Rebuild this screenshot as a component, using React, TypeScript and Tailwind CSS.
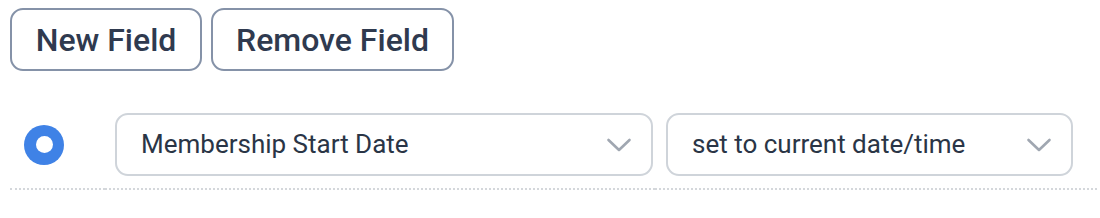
import React from "react";

function Chevron() {
  return (
    <svg width="26" height="16" viewBox="0 0 26 16" fill="none" className="shrink-0">
      <path d="M2.5 3 L13 13 L23.5 3" stroke="#a0a7b1" strokeWidth="2.6" strokeLinecap="round" strokeLinejoin="round" />
    </svg>
  );
}

function Select({ label, width }: { label: string; width: string }) {
  return (
    <div
      className={`${width} h-[63px] flex items-center justify-between rounded-[13px] border-2 border-[#cfd4da] bg-white pl-[24px] pr-[19px] text-[26px] text-[#2a3546]`}
    >
      <span>{label}</span>
      <Chevron />
    </div>
  );
}

export default function App() {
  return (
    <div className="bg-white w-[1100px] h-[218px] pt-2 pl-[10px]" style={{ fontFamily: "Roboto, 'Liberation Sans', sans-serif" }}>
      <div className="flex gap-[9px]">
        <button className="h-[63px] w-[192px] rounded-[13px] border-2 border-[#8592a8] bg-white text-[32px] font-medium text-[#2f3a4f]">
          New Field
        </button>
        <button className="h-[63px] w-[243px] rounded-[13px] border-2 border-[#8592a8] bg-white text-[32px] font-medium text-[#2f3a4f]">
          Remove Field
        </button>
      </div>
      <div className="mt-[30px] flex w-[1087px]">
        <div className="w-[95px] pt-[12px] pb-[12px] border-b-2 border-dotted border-[#d4d7db] flex items-center pl-[14px]">
          <div className="h-[63px] flex items-center">
            <div className="w-[40px] h-[40px] rounded-full bg-[#3f82e6] flex items-center justify-center">
              <div className="w-[17px] h-[17px] rounded-full bg-white" />
            </div>
          </div>
        </div>
        <div className="w-[550px] pt-[12px] pb-[12px] pl-[10px] border-b-2 border-dotted border-[#d4d7db]">
          <Select label="Membership Start Date" width="w-[538px]" />
        </div>
        <div className="w-[442px] pt-[12px] pb-[12px] pl-[11px] border-b-2 border-dotted border-[#d4d7db]">
          <Select label="set to current date/time" width="w-[407px]" />
        </div>
      </div>
    </div>
  );
}
